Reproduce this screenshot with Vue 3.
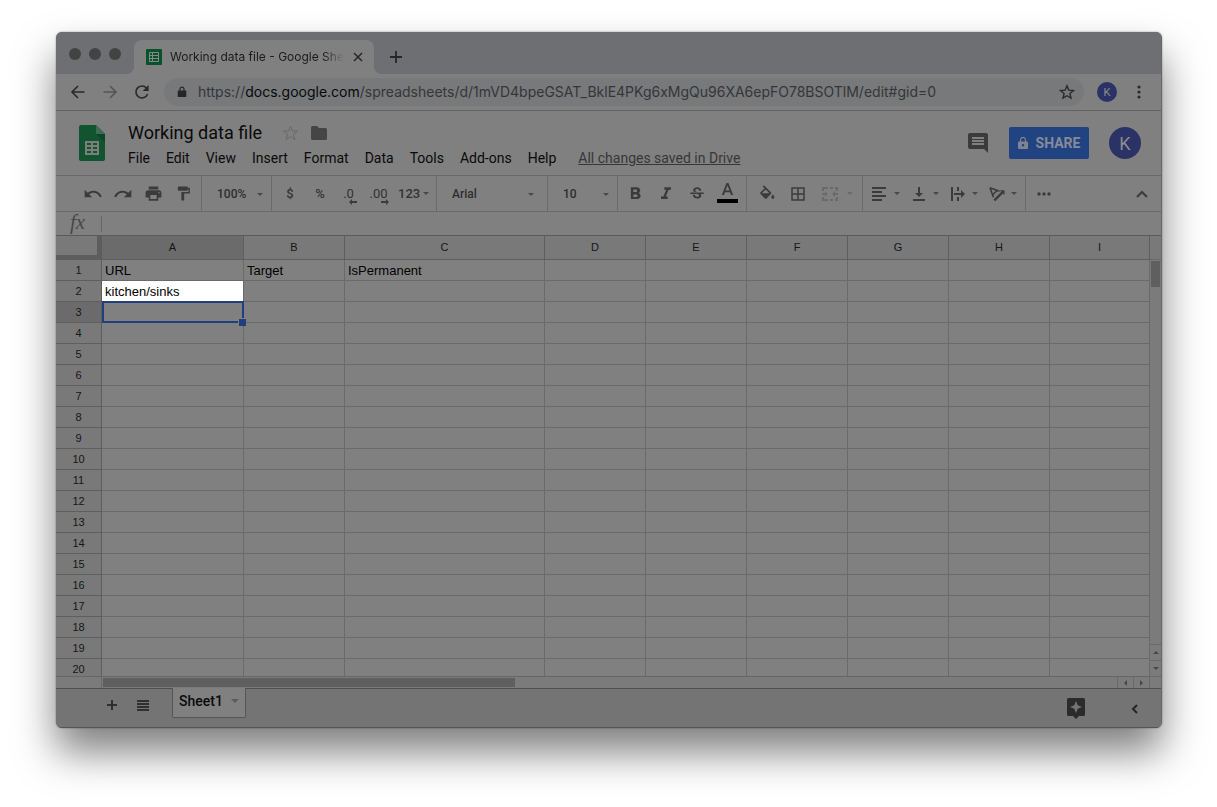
<script setup>
import { ref } from 'vue'

const menus = ['File', 'Edit', 'View', 'Insert', 'Format', 'Data', 'Tools', 'Add-ons', 'Help']
const columns = ['A', 'B', 'C', 'D', 'E', 'F', 'G', 'H', 'I']
const cells = {
  A1: 'URL',
  B1: 'Target',
  C1: 'IsPermanent',
  A2: 'kitchen/sinks'
}
const title = ref('Working data file')
const formula = ref('')
</script>

<template>
  <div class="desktop">
    <main class="window">
      <header class="tabstrip">
        <div class="lights"><i></i><i></i><i></i></div>
        <div class="tab">
          <svg class="favicon" width="16" height="16" viewBox="0 0 16 16">
            <rect width="16" height="16" rx="1" fill="#07512b" />
            <path d="M3.5 3.5h9v9h-9zM3.5 6.5h9M3.5 9.5h9M6.5 3.5v9" fill="none" stroke="#888" />
          </svg>
          <span class="tab-title">Working data file - Google Sheets</span>
          <button class="plain close" aria-label="Close tab">
            <svg width="10" height="10" viewBox="0 0 10 10"><path d="M1 1l8 8M9 1L1 9" stroke="#252627" stroke-width="1.5" /></svg>
          </button>
        </div>
        <button class="plain newtab" aria-label="New tab">
          <svg width="12" height="12" viewBox="0 0 12 12"><path d="M6 0v12M0 6h12" stroke="#252627" stroke-width="1.8" /></svg>
        </button>
      </header>

      <nav class="navbar" aria-label="Browser">
        <button class="plain nav" aria-label="Back">
          <svg width="16" height="16" viewBox="0 0 16 16"><path d="M14.5 8H2.5M8 2L2 8l6 6" fill="none" stroke="#29292b" stroke-width="1.6" /></svg>
        </button>
        <button class="plain nav" aria-label="Forward">
          <svg width="16" height="16" viewBox="0 0 16 16"><path d="M1.500 8h12M8 2l6 6-6 6" fill="none" stroke="#545556" stroke-width="1.6" /></svg>
        </button>
        <button class="plain nav" aria-label="Reload">
          <svg width="16" height="16" viewBox="0 0 16 16"><path d="M13.600 10A6 6 0 1 1 12.500 4" fill="none" stroke="#29292b" stroke-width="1.6" /><path d="M14.600 1v6H8.700z" fill="#29292b" /></svg>
        </button>
        <div class="omnibox">
          <svg width="10" height="12" viewBox="0 0 10 12"><path d="M1.500 4.500h7a.8.8 0 0 1 .8.800V10.200a.8.8 0 0 1-.8.800h-7a.8.8 0 0 1-.8-.8V5.300a.8.8 0 0 1 .8-.8z" fill="#252627" /><path d="M3 5V3.200a2 2 0 0 1 4 0V5" fill="none" stroke="#252627" stroke-width="1.200" /></svg>
          <div class="url">https://<b>docs.google.com</b>/spreadsheets/d/1mVD4bpeGSAT_BklE4PKg6xMgQu96XA6epFO78BSOTlM/edit#gid=0</div>
          <button class="plain" aria-label="Bookmark this page">
            <svg width="16" height="16" viewBox="0 0 16 16"><path d="M8 1.800l1.800 4.300 4.700.4-3.600 3 1.100 4.600L8 11.700l-4 2.400 1.100-4.600-3.600-3 4.700-.4z" fill="none" stroke="#2a2b2c" stroke-width="1.400" /></svg>
          </button>
        </div>
        <button class="plain avatar small" aria-label="Profile K">K</button>
        <button class="plain dots" aria-label="Browser menu">
          <svg width="4" height="14" viewBox="0 0 4 14" fill="#2a2b2c"><circle cx="2" cy="2" r="1.600" /><circle cx="2" cy="7" r="1.600" /><circle cx="2" cy="12" r="1.600" /></svg>
        </button>
      </nav>

      <section class="dochead">
        <a class="logo" href="#" aria-label="Sheets home">
          <svg width="26" height="36" viewBox="0 0 26 36">
            <path d="M2 0h15l9 9v25a2 2 0 0 1-2 2H2a2 2 0 0 1-2-2V2a2 2 0 0 1 2-2z" fill="#125330" />
            <path d="M17 9h9v9z" fill="#0e4427" />
            <path d="M17 0l9 9h-9z" fill="#3f6c52" />
            <path d="M6 16h14v14H6z" fill="#7b7f7c" />
            <path d="M8 18h4v2H8zM14 18h4v2h-4zM8 22h4v2H8zM14 22h4v2h-4zM8 26h4v2H8zM14 26h4v2h-4z" fill="#125330" />
          </svg>
        </a>
        <div class="docinfo">
          <div class="titleline">
            <input v-model="title" class="title" aria-label="Document name" />
            <button class="plain" aria-label="Star">
              <svg width="17" height="16" viewBox="0 0 17 16"><path d="M8.500 1l1.800 5h5.400l-4.300 3.400 1.600 5.300-4.500-3.200L4 14.700l1.600-5.300L1.300 6h5.400z" fill="none" stroke="#696969" stroke-width="1" /></svg>
            </button>
            <button class="plain" aria-label="Move to folder">
              <svg width="16" height="14" viewBox="0 0 16 14"><path d="M1.500 0H6l2 2h6.500A1.500 1.500 0 0 1 16 3.500v9a1.500 1.500 0 0 1-1.500 1.500h-13A1.500 1.500 0 0 1 0 12.500v-11A1.500 1.500 0 0 1 1.500 0z" fill="#454545" /></svg>
            </button>
          </div>
          <nav class="menus" aria-label="Document">
            <button v-for="m in menus" :key="m" class="plain">{{ m }}</button>
            <a href="#" class="saved">All changes saved in Drive</a>
          </nav>
        </div>
        <div class="actions">
          <button class="plain" aria-label="Comments">
            <svg width="20" height="20" viewBox="2 2 20 20"><path d="M21.990 4c0-1.100-.89-2-1.990-2H4c-1.100 0-2 .9-2 2v12c0 1.100.9 2 2 2h14l4 4-.010-18zM18 14H6v-2h12v2zm0-3H6V9h12v2zm0-3H6V6h12v2z" fill="#3b3b3b" /></svg>
          </button>
          <button class="plain share">
            <svg width="10" height="12" viewBox="0 0 10 12"><path fill-rule="evenodd" d="M1 4.500h8a1 1 0 0 1 1 1V11a1 1 0 0 1-1 1H1a1 1 0 0 1-1-1V5.500a1 1 0 0 1 1-1zM5 7a1.200 1.200 0 1 0 0 2.500A1.200 1.200 0 0 0 5 7z" fill="#7f8490" /><path d="M2.500 5V3a2.500 2.500 0 0 1 5 0v2" fill="none" stroke="#7f8490" stroke-width="1.200" /></svg>
            SHARE
          </button>
          <button class="plain avatar" aria-label="Account K">K</button>
        </div>
      </section>

      <div class="toolbar" role="toolbar" aria-label="Formatting">
        <div class="group history">
          <button class="plain tool" aria-label="Undo"><svg width="20" height="20" viewBox="0 0 24 24"><path d="M12.500 8c-2.650 0-5.050.99-6.900 2.600L2 7v9h9l-3.620-3.620c1.390-1.160 3.160-1.880 5.120-1.880 3.540 0 6.550 2.310 7.600 5.500l2.370-.78C21.080 11.030 17.150 8 12.500 8z" /></svg></button>
          <button class="plain tool" aria-label="Redo"><svg width="20" height="20" viewBox="0 0 24 24"><path d="M18.400 10.600C16.550 8.990 14.150 8 11.500 8c-4.650 0-8.580 3.030-9.960 7.220L3.900 16c1.050-3.190 4.050-5.500 7.600-5.500 1.950 0 3.730.72 5.120 1.880L13 16h9V7l-3.600 3.600z" /></svg></button>
          <button class="plain tool" aria-label="Print"><svg width="19" height="19" viewBox="0 0 24 24"><path d="M19 8H5c-1.660 0-3 1.340-3 3v6h4v4h12v-4h4v-6c0-1.660-1.340-3-3-3zm-3 11H8v-5h8v5zm3-7c-.55 0-1-.45-1-1s.45-1 1-1 1 .45 1 1-.45 1-1 1zm-1-9H6v4h12V3z" /></svg></button>
          <button class="plain tool" aria-label="Paint format"><svg width="17" height="17" viewBox="0 0 24 24"><path d="M18 4V3c0-.55-.45-1-1-1H5c-.55 0-1 .45-1 1v4c0 .55.450 1 1 1h12c.55 0 1-.45 1-1V6h1v4H9v11c0 .55.450 1 1 1h2c.55 0 1-.45 1-1v-9h8V4h-3z" /></svg></button>
        </div>
        <div class="group zoom">
          <select aria-label="Zoom"><option>100%</option><option>75%</option></select><i class="caret"></i>
        </div>
        <div class="group formats">
          <button class="plain tool text">$</button>
          <button class="plain tool text">%</button>
          <button class="plain tool text dec" aria-label="Decrease decimal places">.0<svg width="8" height="6" viewBox="0 0 8 6"><path d="M3 0v2h5v2H3v2L0 3z" /></svg></button>
          <button class="plain tool text dec" aria-label="Increase decimal places">.00<svg width="8" height="6" viewBox="0 0 8 6"><path d="M5 0v2H0v2h5v2l3-3z" /></svg></button>
          <button class="plain text more">123<i class="arrow"></i></button>
        </div>
        <div class="group font">
          <select aria-label="Font"><option>Arial</option><option>Roboto</option></select><i class="caret"></i>
        </div>
        <div class="group size">
          <select aria-label="Font size"><option>10</option><option>12</option></select><i class="caret"></i>
        </div>
        <div class="group styles">
          <button class="plain tool" aria-label="Bold"><svg width="20" height="20" viewBox="0 0 24 24"><path d="M15.600 10.790c.97-.67 1.650-1.770 1.650-2.790 0-2.260-1.750-4-4-4H6v14h8.040c2.090 0 3.710-1.700 3.710-3.790 0-1.520-.86-2.820-2.150-3.420zM9 6.500h3c.83 0 1.500.67 1.500 1.500s-.67 1.500-1.500 1.500H9v-3zm3.500 9H9v-3h3.500c.83 0 1.500.67 1.500 1.500s-.67 1.500-1.500 1.500z" transform="translate(1 0)" /></svg></button>
          <button class="plain tool" aria-label="Italic"><svg width="20" height="20" viewBox="0 0 24 24"><path d="M10 4v3h2.210l-3.420 8H6v3h8v-3h-2.210l3.420-8H18V4z" /></svg></button>
          <button class="plain tool" aria-label="Strikethrough"><svg width="18" height="18" viewBox="0 0 24 24"><path d="M6.850 7.080C6.850 4.370 9.450 3 12.240 3c1.640 0 3 .49 3.900 1.280.77.65 1.460 1.730 1.460 3.240h-3.010c0-.31-.05-.59-.15-.85-.29-.86-1.200-1.280-2.250-1.280-1.860 0-2.340 1.020-2.340 1.700 0 .48.25.88.740 1.210.38.250.770.480 1.410.7H7.390c-.21-.34-.54-.89-.54-1.920zM21 12v-2H3v2h9.620c1.150.45 1.960.75 1.960 1.970 0 1-.81 1.670-2.280 1.670-1.540 0-2.930-.54-2.930-2.510H6.400c0 .55.080 1.130.240 1.580.81 2.290 3.290 3.300 5.670 3.300 2.270 0 5.300-.89 5.300-4.050 0-.3-.01-1.160-.48-1.940H21V12z" /></svg></button>
          <button class="plain tool" aria-label="Text color"><svg width="22" height="22" viewBox="0 0 22 22"><path d="M9.500 0h2l4.700 12h-2.200l-1-2.700H8L7 12H4.800zM10.500 2.600L8.600 7.600h3.800z" /><path d="M0 16h21v4H0z" fill="#000" /></svg></button>
        </div>
        <div class="group fills">
          <button class="plain tool" aria-label="Fill color"><svg width="19" height="20" viewBox="0 2 24 24"><path d="M16.560 8.940L7.620 0 6.210 1.410l2.380 2.380-5.150 5.150c-.59.590-.59 1.540 0 2.120l5.500 5.500c.290.290.680.440 1.060.440s.77-.15 1.060-.44l5.500-5.500c.59-.58.590-1.530 0-2.120zM5.210 10L10 5.210 14.790 10H5.210zM19 11.500s-2 2.170-2 3.500c0 1.100.9 2 2 2s2-.9 2-2c0-1.330-2-3.500-2-3.500z" transform="translate(1 3)" /></svg></button>
          <button class="plain tool" aria-label="Borders"><svg width="18" height="18" viewBox="0 0 24 24"><path d="M3 3v18h18V3H3zm8 16H5v-6h6v6zm0-8H5V5h6v6zm8 8h-6v-6h6v6zm0-8h-6V5h6v6z" /></svg></button>
          <button class="plain tool faint" aria-label="Merge cells"><svg width="16" height="14" viewBox="0 0 16 14"><path d="M0 0h6v2H2v2H0zM8 0h3v2H8zM13 0h3v4h-2V2h-1zM0 10h2v2h4v2H0zM14 10h2v4h-3v-2h1zM8 12h3v2H8zM0 6h3V4l3 3-3 3V8H0zM16 6h-3V4l-3 3 3 3V8h3z" /></svg></button>
          <i class="arrow"></i>
        </div>
        <div class="group aligns">
          <button class="plain drop" aria-label="Horizontal align"><svg width="20" height="18" viewBox="0 0 20 18"><path d="M2 2h14v2H2zM2 6h10v2H2zM2 10h14v2H2zM2 14h10v2H2z" /></svg><i class="arrow"></i></button>
          <button class="plain drop" aria-label="Vertical align"><svg width="20" height="18" viewBox="0 0 20 18"><path d="M9 2v6H6l4 4 4-4h-3V2zM4 14h12v2H4z" /></svg><i class="arrow"></i></button>
          <button class="plain drop" aria-label="Text wrapping"><svg width="20" height="18" viewBox="0 0 20 18"><path d="M3 2h2v14H3zM9 2h2v4H9zM9 12h2v4H9zM6 8h7V5l4 4-4 4v-3H6z" /></svg><i class="arrow"></i></button>
          <button class="plain drop" aria-label="Text rotation"><svg width="20" height="18" viewBox="0 0 20 18"><path d="M3 2.800l9.500 3.400M3 2.800l3.400 9.500M10 5.500L6 9.500" fill="none" stroke="#3b3b3b" stroke-width="1.700" /><path d="M6.500 14.500L14.300 6.800 12.800 5.300H17.500V10L16 8.500 8.200 16.200z" /></svg><i class="arrow"></i></button>
        </div>
        <button class="plain ellipsis" aria-label="More"><svg width="14" height="4" viewBox="0 0 14 4"><circle cx="2" cy="2" r="1.700" /><circle cx="7" cy="2" r="1.700" /><circle cx="12" cy="2" r="1.700" /></svg></button>
        <button class="plain collapse" aria-label="Hide the menus"><svg width="12" height="8" viewBox="0 0 12 8"><path d="M1 7l5-5 5 5" fill="none" stroke="#3b3b3b" stroke-width="2" /></svg></button>
      </div>

      <div class="formula">
        <label for="fx">fx</label>
        <input id="fx" v-model="formula" />
      </div>

      <div class="sheet">
        <div class="viewport">
          <table>
            <colgroup>
              <col class="c-num" /><col class="c-a" /><col class="c-std" /><col class="c-c" />
              <col v-for="n in 5" :key="n" class="c-std" /><col />
            </colgroup>
            <thead>
              <tr>
                <td class="corner"></td>
                <th v-for="c in columns" :key="c" scope="col" :class="{ active: c === 'A' }">{{ c }}</th>
              </tr>
            </thead>
            <tbody>
              <tr v-for="r in 20" :key="r">
                <th scope="row" :class="{ active: r === 3 }">{{ r }}</th>
                <td v-for="c in columns" :key="c" :class="{ lit: c + r === 'A2', selected: c + r === 'A3' }">{{ cells[c + r] }}</td>
              </tr>
            </tbody>
          </table>
        </div>
        <div class="vscroll">
          <div class="cap"></div>
          <div class="vthumb"></div>
          <button class="plain step" aria-label="Scroll up"><i class="tri up"></i></button>
          <button class="plain step" aria-label="Scroll down"><i class="tri down"></i></button>
        </div>
        <div class="hscroll">
          <div class="hpad"></div>
          <div class="track"><div class="hthumb"></div></div>
          <button class="plain hstep" aria-label="Scroll left"><i class="tri left"></i></button>
          <button class="plain hstep" aria-label="Scroll right"><i class="tri right"></i></button>
        </div>
        <div class="nook"></div>
      </div>

      <footer class="sheetbar">
        <button class="plain add" aria-label="Add sheet"><svg width="10" height="10" viewBox="0 0 10 10"><path d="M5 0v10M0 5h10" stroke="#303030" stroke-width="2" /></svg></button>
        <button class="plain list" aria-label="All sheets"><svg width="12" height="11" viewBox="0 0 12 11" fill="#303030"><path d="M0 0h12v2H0zM0 3h12v2H0zM0 6h12v2H0zM0 9h12v2H0z" /></svg></button>
        <button class="plain sheettab">Sheet1<i class="arrow"></i></button>
        <button class="plain explore" aria-label="Explore"><svg width="18" height="21" viewBox="0 0 18 21"><path fill-rule="evenodd" d="M1.500 0h15A1.500 1.500 0 0 1 18 1.500v15a1.500 1.500 0 0 1-1.500 1.500H12l-3 3-3-3H1.500A1.500 1.500 0 0 1 0 16.500v-15A1.500 1.500 0 0 1 1.500 0zM9 3L7.300 7.300 3 9l4.300 1.700L9 15l1.700-4.300L15 9l-4.300-1.700z" fill="#2b2b2b" /></svg></button>
        <button class="plain side" aria-label="Show side panel"><svg width="7" height="10" viewBox="0 0 7 10"><path d="M6 1L2 5l4 4" fill="none" stroke="#262626" stroke-width="2" /></svg></button>
      </footer>
    </main>
  </div>
</template>

<style>
body {
  background: #fff;
}
</style>

<style scoped>
* {
  box-sizing: border-box;
}
.desktop {
  padding: 32px 55px 79px 56px;
  overflow: hidden;
  font-family: Roboto, "Liberation Sans", sans-serif;
  color: #0a0a0a;
}
.window {
  background: #808080;
  border-radius: 6px;
  border-right: 1px solid #686868;
  overflow: hidden;
  box-shadow: 0 24px 40px rgba(0, 0, 0, 0.5), 0 0 2px rgba(0, 0, 0, 0.4);
}
.plain {
  display: flex;
  align-items: center;
  justify-content: center;
  border: 0;
  padding: 0;
  background: none;
  color: inherit;
  font: inherit;
}
svg {
  display: block;
  flex: none;
}
input,
select {
  border: 0;
  padding: 0;
  background: none;
  outline: 0;
  appearance: none;
  border-radius: 0;
  font: inherit;
  color: inherit;
}

.tabstrip {
  display: flex;
  align-items: flex-end;
  height: 42px;
  padding-left: 13px;
  background: #6d6f73;
}
.lights {
  display: flex;
  gap: 8px;
  width: 65px;
  height: 26px;
}
.lights i {
  width: 12px;
  height: 12px;
  border-radius: 50%;
  background: #434343;
}
.tab {
  display: flex;
  align-items: center;
  position: relative;
  width: 240px;
  height: 34px;
  padding: 0 11px 0 12px;
  border-radius: 8px 8px 0 0;
  background: #808080;
  font: 12px/16px Inter, sans-serif;
  color: #1b1b1c;
}
.tab::before,
.tab::after {
  content: "";
  position: absolute;
  bottom: 0;
  left: -8px;
  width: 8px;
  height: 8px;
  background: radial-gradient(circle at 0 0, #6d6f73 8px, #808080 8px);
}
.tab::after {
  left: auto;
  right: -8px;
  background: radial-gradient(circle at 100% 0, #6d6f73 8px, #808080 8px);
}
.tab-title {
  flex: 1;
  margin-left: 8px;
  overflow: hidden;
  white-space: nowrap;
  mask-image: linear-gradient(to right, #000 88%, transparent);
}
.close {
  margin-left: 9px;
}
.newtab {
  width: 44px;
  height: 34px;
}

.navbar {
  display: flex;
  align-items: center;
  height: 37px;
  padding-left: 6px;
  border-bottom: 1px solid #626262;
}
.nav {
  width: 32px;
}
.omnibox {
  display: flex;
  align-items: center;
  flex: 1;
  min-width: 0;
  height: 28px;
  margin-left: 6px;
  padding: 0 9px 0 13px;
  border-radius: 14px;
  background: #77797b;
}
.url {
  flex: 1;
  min-width: 0;
  margin-left: 11px;
  overflow: hidden;
  white-space: nowrap;
  font: 14px/20px Inter, sans-serif;
  color: #353638;
}
.url b {
  font-weight: 400;
  color: #080808;
}
.avatar {
  width: 32px;
  height: 32px;
  margin-left: 20px;
  border-radius: 50%;
  background: #2b3265;
  color: #8d8d92;
  font-size: 18px;
}
.avatar.small {
  width: 20px;
  height: 20px;
  margin-left: 13px;
  font-size: 11px;
}
.dots {
  width: 44px;
}

.dochead {
  display: flex;
  height: 65px;
  padding: 0 20px 0 23px;
  border-bottom: 1px solid #696969;
}
.logo {
  margin-top: 14px;
}
.docinfo {
  flex: 1;
  margin: 10px 0 0 23px;
}
.titleline {
  display: flex;
  align-items: center;
  gap: 12px;
  height: 24px;
}
.title {
  width: 142px;
  font-size: 18px;
  line-height: 24px;
}
.menus {
  display: flex;
  gap: 16px;
  margin-top: 3px;
  font-size: 14px;
  line-height: 20px;
  white-space: nowrap;
}
.saved {
  margin-left: 6px;
  color: #373737;
  text-decoration: underline;
}
.actions {
  display: flex;
  align-items: center;
}
.share {
  gap: 8px;
  width: 80px;
  height: 32px;
  margin-left: 21px;
  border-radius: 2px;
  background: #214381;
  color: #858b98;
  font-size: 14px;
  font-weight: 700;
}

.toolbar {
  display: flex;
  height: 36px;
  border-bottom: 1px solid #696969;
  color: #2e2e2e;
  font-size: 13px;
  font-weight: 500;
}
.toolbar svg {
  fill: #3b3b3b;
}
.group {
  display: flex;
  align-items: center;
  position: relative;
  border-right: 1px solid #6a6a6a;
}
.history {
  width: 146px;
  padding-left: 22px;
}
.zoom,
.size {
  width: 70px;
}
.formats {
  width: 165px;
  padding-left: 3px;
}
.font {
  width: 111px;
}
.styles {
  gap: 1px;
  width: 129px;
  padding-left: 2px;
}
.fills {
  gap: 2px;
  width: 116px;
  padding-left: 4px;
}
.aligns {
  width: 163px;
}
.tool {
  width: 30px;
  height: 34px;
}
.text {
  color: #333;
}
.dec {
  position: relative;
  padding-right: 3px;
  font-weight: 400;
}
.dec svg {
  position: absolute;
  right: 8px;
  bottom: 6px;
}
.dec + .dec svg {
  right: 6px;
}
.more {
  gap: 3px;
  margin-left: 3px;
}
.drop {
  gap: 4px;
  width: 39px;
  height: 34px;
  padding-left: 5px;
}
.faint {
  opacity: 0.3;
}
.arrow,
.caret {
  width: 0;
  height: 0;
  border: 3px solid transparent;
  border-top-color: #484848;
  border-bottom: 0;
}
.fills .arrow {
  border-top-color: #6a6a6a;
}
.group select {
  width: 100%;
  height: 35px;
  padding-left: 15px;
  font-size: 12px;
}
.caret {
  position: absolute;
  right: 8px;
  top: 17px;
  pointer-events: none;
}
.font .caret {
  right: 13px;
}
.ellipsis {
  width: 36px;
}
.collapse {
  margin-left: auto;
  margin-right: 13px;
}

.formula {
  display: flex;
  align-items: center;
  height: 24px;
}
.formula label {
  width: 45px;
  padding: 0 0 4px 14px;
  font: italic 21px/20px "Liberation Serif", serif;
  color: #484848;
}
.formula input {
  flex: 1;
  height: 16px;
  padding-left: 8px;
  border-left: 1px solid #666;
}

.sheet {
  display: grid;
  grid-template-columns: 1fr 11px;
  grid-template-rows: 441px 11px;
  border-top: 1px solid #5a5a5a;
  margin-top: -1px;
}
.viewport {
  overflow: hidden;
  border-bottom: 1px solid #666;
}
table {
  width: 100%;
  table-layout: fixed;
  border-spacing: 0;
  font: 13px/18px "Liberation Sans", Arial, sans-serif;
  color: #000;
}
.c-num {
  width: 46px;
}
.c-a {
  width: 142px;
}
.c-std {
  width: 101px;
}
.c-c {
  width: 200px;
}
th,
td {
  height: 21px;
  padding: 2px 3px 0;
  border-right: 1px solid #6a6a6a;
  border-bottom: 1px solid #6a6a6a;
  white-space: nowrap;
}
th {
  padding: 0;
  border-color: #5e5e5e;
  background: #797979;
  font-size: 11px;
  font-weight: 400;
  color: #161616;
}
thead th,
.corner {
  height: 24px;
  padding: 0 0 2px;
}
th.active {
  background: #6b6b6b;
}
.corner {
  border-right: 5px solid #5d5d5d;
  border-bottom: 5px solid #5d5d5d;
  background: #797979;
}
.lit {
  background: #fff;
  background-clip: padding-box;
}
.selected {
  position: relative;
}
.selected::before {
  content: "";
  position: absolute;
  inset: -1px -1px -1px 0;
  border: 2px solid #1f4080;
}
.selected::after {
  content: "";
  position: absolute;
  right: -3px;
  bottom: -4px;
  width: 7px;
  height: 7px;
  border: solid #808080;
  border-width: 1px 0 0 1px;
  background: #1f4080;
}
.vscroll {
  display: flex;
  flex-direction: column;
  background: #7b7b7b;
}
.cap {
  height: 24px;
  border-bottom: 1px solid #6a6a6a;
  background: #797979;
}
.vthumb {
  width: 9px;
  height: 26px;
  margin: 1px 1px auto;
  background: #5f5f5f;
}
.step {
  height: 16px;
  border-top: 1px solid #696969;
}
.step:last-child {
  height: 17px;
  border-bottom: 1px solid #696969;
}
.hscroll {
  display: flex;
  background: #7b7b7b;
}
.hpad {
  width: 46px;
  border-right: 1px solid #696969;
}
.track {
  flex: 1;
  padding: 1px;
}
.hthumb {
  width: 412px;
  max-width: 60%;
  height: 9px;
  background: #5f5f5f;
}
.hstep {
  width: 16px;
  border-left: 1px solid #696969;
}
.hstep:last-child {
  width: 17px;
  border-right: 1px solid #696969;
}
.nook {
  background: #7b7b7b;
}
.tri {
  border: 3px solid transparent;
}
.up {
  border-top: 0;
  border-bottom-color: #484848;
}
.down {
  border-bottom: 0;
  border-top-color: #484848;
}
.left {
  border-left: 0;
  border-right-color: #484848;
}
.right {
  border-right: 0;
  border-left-color: #484848;
}

.sheetbar {
  display: flex;
  align-items: center;
  height: 40px;
  padding-left: 40px;
  border-top: 1px solid #505050;
  border-bottom: 1px solid #555;
  background: #747474;
}
.add,
.list {
  width: 31px;
  height: 31px;
  margin-bottom: 6px;
}
.sheettab {
  align-self: flex-start;
  gap: 8px;
  width: 74px;
  height: 30px;
  margin: -1px 0 0 14px;
  padding-bottom: 3px;
  border: 1px solid #555;
  border-top: 0;
  border-radius: 0 0 2px 2px;
  background: #808080;
  font-size: 14px;
  font-weight: 500;
}
.sheettab .arrow {
  border-width: 4px 4px 0;
  border-top-color: #5c5c5c;
}
.explore {
  margin-left: auto;
}
.side {
  width: 26px;
  margin: 2px 14px 0 36px;
}
</style>
